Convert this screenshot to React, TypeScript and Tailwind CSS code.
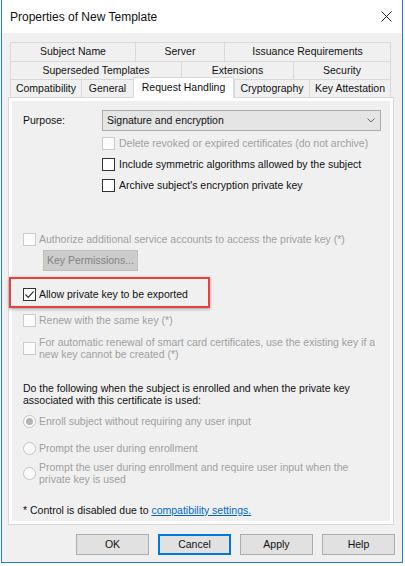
import React from "react";

type BoxProps = { checked?: boolean; disabled?: boolean };

function Check({ checked, disabled }: BoxProps) {
  return (
    <div
      className={`w-[13px] h-[13px] shrink-0 border flex items-center justify-center ${
        disabled ? "border-[#cccccc] bg-[#fbfbfb]" : "border-[#333333] bg-white"
      }`}
    >
      {checked && (
        <svg width="11" height="11" viewBox="0 0 11 11">
          <path d="M1.5 5.5 L4.2 8.3 L9.6 2.4" fill="none" stroke="#333" strokeWidth="1.2" />
        </svg>
      )}
    </div>
  );
}

function Radio({ checked, disabled }: BoxProps) {
  return (
    <div
      className={`w-[13px] h-[13px] shrink-0 rounded-full border flex items-center justify-center ${
        disabled ? "border-[#c4c4c4] bg-[#fbfbfb]" : "border-[#333333] bg-white"
      }`}
    >
      {checked && <div className="w-[7px] h-[7px] rounded-full bg-[#b4b4b4]" />}
    </div>
  );
}

const tabRows = [
  [
    { label: "Subject Name", w: "w-[125px]" },
    { label: "Server", w: "w-[89px]" },
    { label: "Issuance Requirements", w: "w-[167px]" },
  ],
  [
    { label: "Superseded Templates", w: "w-[171px]" },
    { label: "Extensions", w: "w-[112px]" },
    { label: "Security", w: "w-[98px]" },
  ],
];

const lastRow = [
  { label: "Compatibility", w: "w-[71px]" },
  { label: "General", w: "w-[52px]" },
  { label: "Request Handling", w: "w-[101px]", active: true },
  { label: "Cryptography", w: "w-[75px]" },
  { label: "Key Attestation", w: "w-[82px]" },
];

export default function App() {
  return (
    <div className="w-[405px] h-[566px] bg-white pl-[1px] font-['Liberation_Sans',Arial,sans-serif] text-[10.5px] text-[#111111] whitespace-nowrap">
      <div className="w-[402px] h-[563px] border-x border-b border-[#1f7fd1] bg-[#f0f0f0] flex flex-col">
        {/* title bar */}
        <div className="h-[33px] bg-white flex items-center justify-between pl-[8px] pr-[10px] shrink-0">
          <span className="text-[12px]">Properties of New Template</span>
          <svg width="11" height="11" viewBox="0 0 11 11">
            <path d="M0.5 0.5 L10.5 10.5 M10.5 0.5 L0.5 10.5" stroke="#222" strokeWidth="1" />
          </svg>
        </div>

        <div className="pt-[9px] pl-[6px]">
          {/* tabs */}
          <div className="ml-[2px] w-[381px]">
            {tabRows.map((row, i) => (
              <div key={i} className={`flex ${i === 0 ? "h-[19px]" : "h-[18px]"}`}>
                {row.map((t, j) => (
                  <div
                    key={t.label}
                    className={`${t.w} h-full border-t border-l border-[#d9d9d9] flex items-center justify-center ${
                      j === row.length - 1 ? "border-r" : ""
                    }`}
                  >
                    {t.label}
                  </div>
                ))}
              </div>
            ))}
            <div className="flex items-start h-[18px]">
              {lastRow.map((t, j) =>
                t.active ? (
                  <div
                    key={t.label}
                    className={`${t.w} h-[21px] -mt-[2px] relative z-10 bg-white border-x border-t border-[#d9d9d9] flex items-start justify-center pt-[2px]`}
                  >
                    {t.label}
                  </div>
                ) : (
                  <div
                    key={t.label}
                    className={`${t.w} h-full border-t border-l border-[#d9d9d9] flex items-center justify-center ${
                      j === lastRow.length - 1 ? "border-r" : ""
                    }`}
                  >
                    {t.label}
                  </div>
                )
              )}
            </div>
          </div>

          {/* tab page */}
          <div className="w-[386px] h-[428px] border border-[#d9d9d9] bg-white p-[3px]">
            <div className="h-full bg-[#f0f0f0] pl-[11px] pr-[9px] flex flex-col">
              <div className="mt-[9px] h-[21px] flex items-center">
                <span className="w-[79px] shrink-0">Purpose:</span>
                <div className="flex-1 h-full border border-[#acacac] bg-[#e5e5e5] flex items-center justify-between pl-[4px] pr-[5px]">
                  <span>Signature and encryption</span>
                  <svg width="8" height="5" viewBox="0 0 8 5">
                    <path d="M0.5 0.5 L4 4 L7.5 0.5" fill="none" stroke="#666" strokeWidth="1" />
                  </svg>
                </div>
              </div>

              <div className="ml-[79px] mt-[2px] flex flex-col">
                <div className="h-[21px] flex items-center gap-[4px] text-[#a0a0a0]">
                  <Check disabled />
                  <span>Delete revoked or expired certificates (do not archive)</span>
                </div>
                <div className="h-[21px] flex items-center gap-[4px]">
                  <Check />
                  <span>Include symmetric algorithms allowed by the subject</span>
                </div>
                <div className="h-[21px] flex items-center gap-[4px]">
                  <Check />
                  <span>Archive subject's encryption private key</span>
                </div>
              </div>

              <div className="mt-[33px] h-[21px] flex items-center gap-[3px] text-[#a0a0a0]">
                <Check disabled />
                <span>Authorize additional service accounts to access the private key (*)</span>
              </div>
              <div className="ml-[20px] w-[95px] h-[21px] border border-[#bfbfbf] bg-[#cccccc] text-[#838383] flex items-center justify-center">
                Key Permissions...
              </div>

              <div className="relative mt-[13px] h-[21px] flex items-center gap-[3px]">
                <div className="absolute left-[-14px] top-[-7px] w-[201px] h-[31px] border-[2.5px] border-[#e8403f] shadow-[0_1px_3px_rgba(0,0,0,0.35)]" />
                <Check checked />
                <span>Allow private key to be exported</span>
              </div>

              <div className="mt-[5px] h-[21px] flex items-center gap-[3px] text-[#a0a0a0]">
                <Check disabled />
                <span>Renew with the same key (*)</span>
              </div>

              <div className="mt-[5px] flex items-center gap-[3px] text-[#a0a0a0] leading-[12px]">
                <Check disabled />
                <span>
                  For automatic renewal of smart card certificates, use the existing key if a
                  <br />
                  new key cannot be created (*)
                </span>
              </div>

              <div className="mt-[22px] leading-[12px]">
                Do the following when the subject is enrolled and when the private key
                <br />
                associated with this certificate is used:
              </div>

              <div className="mt-[5px] h-[21px] flex items-center gap-[3px] text-[#a0a0a0]">
                <Radio checked disabled />
                <span>Enroll subject without requiring any user input</span>
              </div>
              <div className="mt-[6px] h-[21px] flex items-center gap-[3px] text-[#a0a0a0]">
                <Radio disabled />
                <span>Prompt the user during enrollment</span>
              </div>
              <div className="mt-[2px] flex items-center gap-[3px] text-[#a0a0a0] leading-[12px]">
                <Radio disabled />
                <span>
                  Prompt the user during enrollment and require user input when the
                  <br />
                  private key is used
                </span>
              </div>

              <div className="mt-[15px] h-[21px] flex items-center">
                <span>* Control is disabled due to&nbsp;</span>
                <span className="text-[#0066cc] underline">compatibility settings.</span>
              </div>
            </div>
          </div>
        </div>

        {/* buttons */}
        <div className="mt-[9px] pr-[7px] flex justify-end gap-[9px]">
          <div className="w-[73px] h-[21px] border border-[#adadad] bg-[#e1e1e1] flex items-center justify-center">OK</div>
          <div className="w-[73px] h-[21px] border-2 border-[#0078d7] bg-[#e1e1e1] flex items-center justify-center">Cancel</div>
          <div className="w-[73px] h-[21px] border border-[#adadad] bg-[#e1e1e1] flex items-center justify-center">Apply</div>
          <div className="w-[73px] h-[21px] border border-[#adadad] bg-[#e1e1e1] flex items-center justify-center">Help</div>
        </div>
      </div>
    </div>
  );
}
